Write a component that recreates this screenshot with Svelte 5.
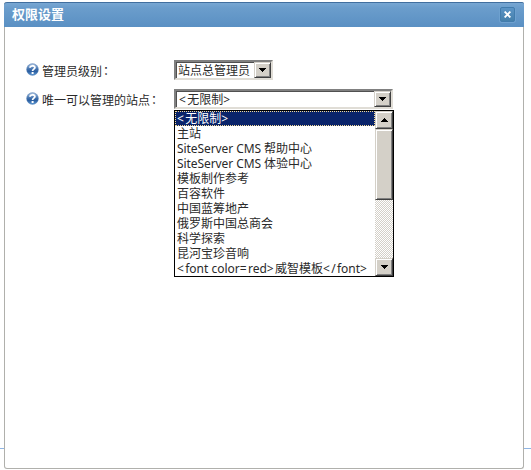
<script>
  const sites = [
    '<无限制>',
    '主站',
    'SiteServer CMS 帮助中心',
    'SiteServer CMS 体验中心',
    '模板制作参考',
    '百容软件',
    '中国蓝筹地产',
    '俄罗斯中国总商会',
    '科学探索',
    '昆河宝珍音响',
    '<font color=red>威智模板</font>'
  ];
  const split = (s) => s.match(/[<>=/]+|[A-Z][\x20-\x7e]*|[^<>=/]+/g);
  let selected = $state(0);
</script>

{#snippet help()}
  <svg class="help" width="13" height="13" viewBox="0 0 13 13">
    <defs>
      <linearGradient id="ball" x1="0" y1="0" x2="0" y2="1">
        <stop offset="0" stop-color="#a9c1df" />
        <stop offset=".45" stop-color="#4474b0" />
        <stop offset=".65" stop-color="#2a5d9f" />
        <stop offset="1" stop-color="#5f9ad4" />
      </linearGradient>
    </defs>
    <circle cx="6.5" cy="6.5" r="5.9" fill="url(#ball)" stroke="#5b84b8" stroke-width=".5" />
    <path d="M4 4.7C4.2 2.2 8.9 2.1 8.9 4.6C8.9 6.2 6.6 6.1 6.6 8" fill="none" stroke="#fff" stroke-width="1.8" />
    <rect x="5.6" y="9" width="2" height="2" fill="#fff" />
  </svg>
{/snippet}

{#snippet arrow(up)}
  <svg width="7" height="4" viewBox="0 0 7 4" shape-rendering="crispEdges">
    {#if up}
      <path d="M3 0h1v1h1v1h1v1h1v1H0V3h1V2h1V1h1z" />
    {:else}
      <path d="M0 0h7v1H6v1H5v1H4v1H3V3H2V2H1V1H0z" />
    {/if}
  </svg>
{/snippet}

{#snippet label(text)}
  {#each split(text) as part}<span class="part" class:symbol={/^[<>=/]/.test(part)} class:product={/^[A-Z]/.test(part)}>{part}</span>{/each}
{/snippet}

<div class="page">
  <section class="dialog">
    <header>
      <h1>权限设置</h1>
      <button class="close" aria-label="关闭">
        <svg width="7" height="7" viewBox="0 0 7 7"><path d="M.6.6l5.8 5.8M6.4.6L.6 6.4" stroke="#fff" stroke-width="1.9" /></svg>
      </button>
    </header>
    <div class="body">
      <div class="field">
        {@render help()}
        <span class="name">管理员级别<span class="colon">：</span></span>
        <div class="select role">
          <span class="value">站点总管理员</span>
          <span class="btn">{@render arrow(false)}</span>
        </div>
      </div>
      <div class="field">
        {@render help()}
        <span class="name">唯一可以管理的站点<span class="colon">：</span></span>
        <div class="select site">
          <span class="value">{@render label(sites[selected])}</span>
          <span class="btn">{@render arrow(false)}</span>
          <div class="menu">
            <ul>
              {#each sites as site, i}
                <li class:active={i === selected}>{@render label(site)}</li>
              {/each}
            </ul>
            <div class="scroll">
              <span class="btn">{@render arrow(true)}</span>
              <span class="btn thumb"></span>
              <span class="btn last">{@render arrow(false)}</span>
            </div>
          </div>
        </div>
      </div>
    </div>
  </section>
</div>

<style>
  :global(body) { margin: 0; background: #fff; }
  * { box-sizing: border-box; }
  svg { display: block; flex: none; }
  .page {
    height: 470px;
    padding: 2px 7px 1px 4px;
    overflow: hidden;
    background: linear-gradient(#8fb5e4, #8fb5e4) 0 448px / 100% 1px no-repeat;
    font: 12px/15px "Noto Sans", "Noto Sans CJK SC", sans-serif;
    color: #2a2a2a;
  }
  .dialog {
    height: 467px;
    border: 1px solid #b0b0ac;
    border-top: 0;
    border-radius: 3px;
    background: #fff;
  }
  header {
    height: 25px;
    margin: 0 -1px;
    padding: 0 9px 0 8px;
    display: flex;
    align-items: center;
    justify-content: space-between;
    border-top: 1px solid #416f9f;
    border-radius: 3px 2px 0 0;
    background: linear-gradient(#78a7d3, #6b9dcc 20%, #5a90c3);
    color: #fff;
  }
  h1 { margin: 0; padding-bottom: 2px; font: bold 13px/20px "Noto Sans CJK SC", sans-serif; }
  .close {
    width: 15px;
    height: 15px;
    margin-bottom: 1px;
    padding: 0;
    display: grid;
    place-items: center;
    border: 1px solid #427cad;
    border-radius: 2px;
    background: linear-gradient(#5c94c6, #4580ab);
    box-shadow: 0 0 0 1px #6ea1cf;
  }
  .body { padding: 33px 0 0 21px; }
  .field { display: flex; align-items: flex-start; height: 29px; }
  .help { margin-top: 3px; }
  .name { width: 132px; padding: 3px 0 0 3px; white-space: nowrap; }
  .colon { margin-left: -2px; font-family: "Noto Sans CJK TC", sans-serif; }
  .select {
    position: relative;
    display: flex;
    height: 20px;
    margin-left: 3px;
    border: 2px solid;
    border-color: #808080 #e0ddd6 #e0ddd6 #808080;
    box-shadow: inset 1px 1px #505050;
    background: #fff;
  }
  .role { width: 99px; }
  .site { width: 219px; }
  .value { flex: 1; padding: 1px 0 0 3px; white-space: nowrap; }
  .role .value { padding-left: 2px; }
  .part { white-space: pre; }
  .symbol { letter-spacing: 1.3px; }
  .product { letter-spacing: -.08px; }
  .btn {
    width: 17px;
    height: 16px;
    flex: none;
    display: grid;
    place-items: center;
    border: 1px solid;
    border-color: #d4d0c8 #404040 #404040 #d4d0c8;
    box-shadow: inset 1px 1px #fff, inset -1px -1px #808080;
    background: #d4d0c8;
  }
  .menu {
    position: absolute;
    left: -2px;
    top: 19px;
    width: 220px;
    height: 167px;
    display: flex;
    border: 1px solid #000;
    background: #fff;
  }
  ul { flex: 1; margin: 0; padding: 0; list-style: none; }
  li { height: 15px; line-height: 15px; padding-left: 2px; white-space: nowrap; }
  .active { background: #0a246a; color: #fff; outline: 1px dotted #f5db95; outline-offset: -1px; }
  .scroll {
    width: 18px;
    display: flex;
    flex-direction: column;
    background: repeating-conic-gradient(#d4d0c8 0 25%, #fff 0 50%) 0 0 / 2px 2px;
  }
  .scroll .btn { width: 18px; height: 18px; }
  .scroll .thumb { height: 71px; }
  .scroll .last { margin-top: auto; }
</style>
